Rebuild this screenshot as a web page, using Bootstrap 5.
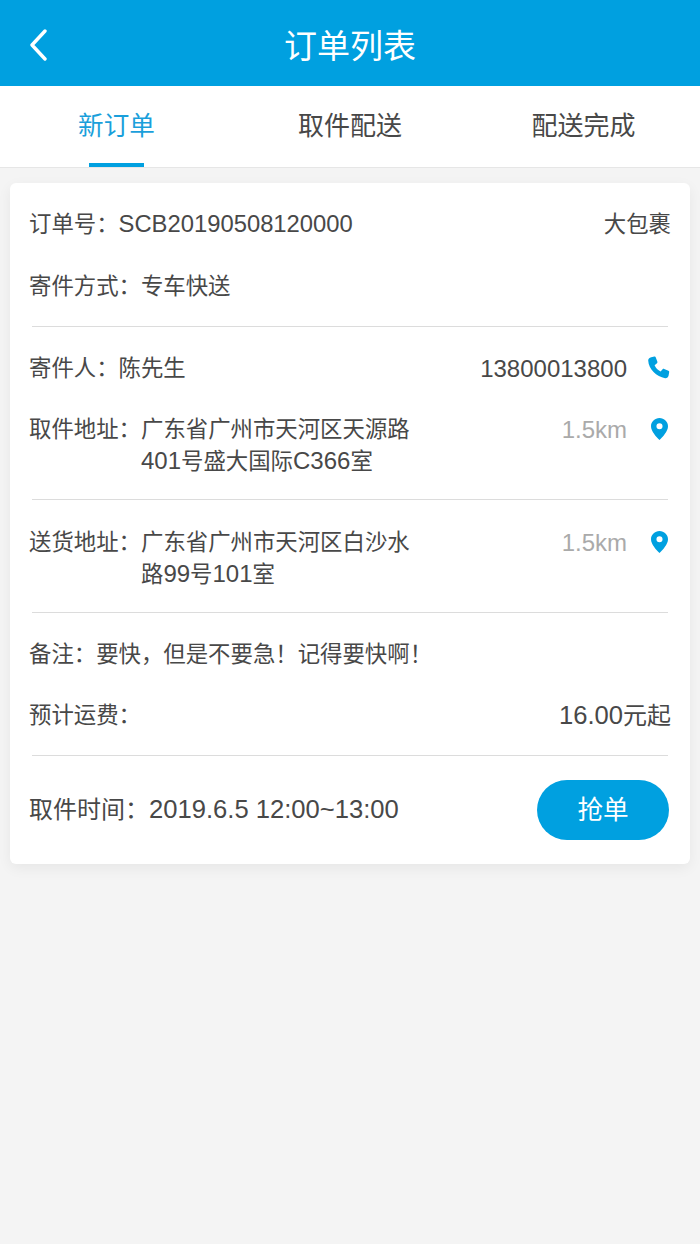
<!DOCTYPE html>
<html lang="zh">
<head>
<meta charset="utf-8">
<title>订单列表</title>
<link href="https://cdn.jsdelivr.net/npm/bootstrap@5.3.0/dist/css/bootstrap.min.css" rel="stylesheet">
<style>
html,body{height:100%;}
body{background:#f4f4f4;font-family:"Liberation Sans","Noto Sans CJK SC",sans-serif;color:#484848;font-size:22.4px;line-height:32px;}
.app-head{height:86px;background:#00a0e0;color:#fff;}
.app-title{font-size:33px;line-height:1;padding-top:7px;}
.app-back{left:29px;top:29px;}
.tabbar{height:82px;background:#fff;border-bottom:1px solid #e6e6e6;}
.tabitem{font-size:26px;height:81px;line-height:80px;color:#484848;}
.tabitem.on{color:#1a9fdb;font-size:25.6px;}
.tabitem.on::after{content:"";position:absolute;left:50%;bottom:0;width:55px;height:4px;margin-left:-28px;background:#00a0e0;}
.tabcol1{width:233px;}.tabcol2{width:234px;}.tabcol3{width:233px;}
.order{margin:15px 10px 0;background:#fff;border-radius:6px;box-shadow:0 4px 14px rgba(0,0,0,.06);padding:26px 19px 24px 19px;}
.orow{min-height:32px;}
.gap1{margin-top:30px;}
.gap2{margin-top:29px;}
.rule{height:1px;background:#dcdcdc;margin:23px 3px 26px 3px;border:0;opacity:1;}
.rule.after-addr{margin-top:21px;}
.rule.wide-below{margin-bottom:27px;}
.rule.btn-below{margin-bottom:24px;}
.lbl{width:112px;flex:none;}
.addr{width:280px;}
.addr-line{height:32px;white-space:nowrap;}
.dist{color:#aaa;text-align:right;}
.endbox{width:44px;flex:none;display:flex;justify-content:flex-end;align-items:center;height:32px;padding-bottom:2px;}
.pin{margin-right:3px;}
.tel{margin-right:1px;}
.num{font-size:24px;line-height:1;}
.num-order{font-size:23.8px;line-height:1;}
.num-side{font-size:24px;line-height:32px;}
.big{font-size:24px;}
.big .num{font-size:25.6px;}
.grab{width:132px;height:60px;background:#00a0e0;border-radius:30px;color:#fff;font-size:25.6px;border:0;padding:0;margin-right:2px;}
.grab:hover{background:#00a0e0;color:#fff;}
</style>
</head>
<body>
<header class="app-head d-flex align-items-center justify-content-center position-relative">
  <svg class="app-back position-absolute" width="20" height="32" viewBox="0 0 20 32" fill="none" stroke="#fff" stroke-width="3.4" stroke-linecap="round" stroke-linejoin="round"><path d="M16 2 3 16l13 14"/></svg>
  <div class="app-title">订单列表</div>
</header>
<nav class="tabbar d-flex">
  <div class="tabitem on tabcol1 text-center position-relative">新订单</div>
  <div class="tabitem tabcol2 text-center">取件配送</div>
  <div class="tabitem tabcol3 text-center">配送完成</div>
</nav>
<main class="order">
  <div class="orow d-flex justify-content-between"><span>订单号：<span class="num-order">SCB20190508120000</span></span><span>大包裹</span></div>
  <div class="orow gap1">寄件方式：专车快送</div>
  <hr class="rule">
  <div class="orow d-flex justify-content-between"><span>寄件人：陈先生</span>
    <span class="d-flex"><span class="num-side">13800013800</span><span class="endbox"><svg class="tel" width="24" height="24" viewBox="0 0 24 24"><path fill="#00a0e0" d="M5.2 1.2 8.4 .6c.7-.1 1.2.2 1.4.8l1.6 4.400c.2.6 0 1.100-.4 1.500L8.600 9.300c1.200 2.700 3.300 4.900 6 6.200l2-2.200c.4-.5 1-.6 1.600-.4l4.200 1.800c.6.300.9.800.8 1.400l-.6 3.400c-.3 1.700-1.800 2.900-3.500 2.700C10.500 21 2.600 13.200 2.200 4.600 2.100 3 3.400 1.600 5.200 1.200Z"/></svg></span></span></div>
  <div class="orow gap2 d-flex justify-content-between">
    <div class="d-flex"><span class="lbl">取件地址：</span><div class="addr"><div class="addr-line">广东省广州市天河区天源路</div><div class="addr-line"><span class="num">401</span>号盛大国际<span class="num">C366</span>室</div></div></div>
    <div class="d-flex"><span class="dist num-side">1.5km</span><span class="endbox"><svg class="pin" width="17" height="22" viewBox="0 0 17 22"><path fill="#00a0e0" fill-rule="evenodd" d="M8.500 0C3.800 0 0 3.700 0 8.300c0 4.900 5.300 10.800 8.500 13.700 3.200-2.900 8.500-8.800 8.500-13.700C17 3.700 13.200 0 8.500 0Zm0 5.200a3 3 0 1 1 0 6.100 3 3 0 0 1 0-6.100Z"/></svg></span></div>
  </div>
  <hr class="rule after-addr wide-below">
  <div class="orow d-flex justify-content-between">
    <div class="d-flex"><span class="lbl">送货地址：</span><div class="addr"><div class="addr-line">广东省广州市天河区白沙水</div><div class="addr-line">路<span class="num">99</span>号<span class="num">101</span>室</div></div></div>
    <div class="d-flex"><span class="dist num-side">1.5km</span><span class="endbox"><svg class="pin" width="17" height="22" viewBox="0 0 17 22"><path fill="#00a0e0" fill-rule="evenodd" d="M8.500 0C3.800 0 0 3.700 0 8.300c0 4.900 5.300 10.800 8.500 13.700 3.200-2.900 8.500-8.800 8.500-13.700C17 3.700 13.200 0 8.500 0Zm0 5.200a3 3 0 1 1 0 6.100 3 3 0 0 1 0-6.100Z"/></svg></span></div>
  </div>
  <hr class="rule after-addr">
  <div class="orow">备注：要快，但是不要急！记得要快啊！</div>
  <div class="orow gap2 d-flex justify-content-between"><span>预计运费：</span><span class="big"><span class="num">16.00</span>元起</span></div>
  <hr class="rule btn-below">
  <div class="d-flex justify-content-between align-items-center"><span class="big">取件时间：<span class="num">2019.6.5 12:00~13:00</span></span><button class="btn grab" type="button">抢单</button></div>
</main>
<script src="https://cdn.jsdelivr.net/npm/bootstrap@5.3.0/dist/js/bootstrap.bundle.min.js"></script>
</body>
</html>
